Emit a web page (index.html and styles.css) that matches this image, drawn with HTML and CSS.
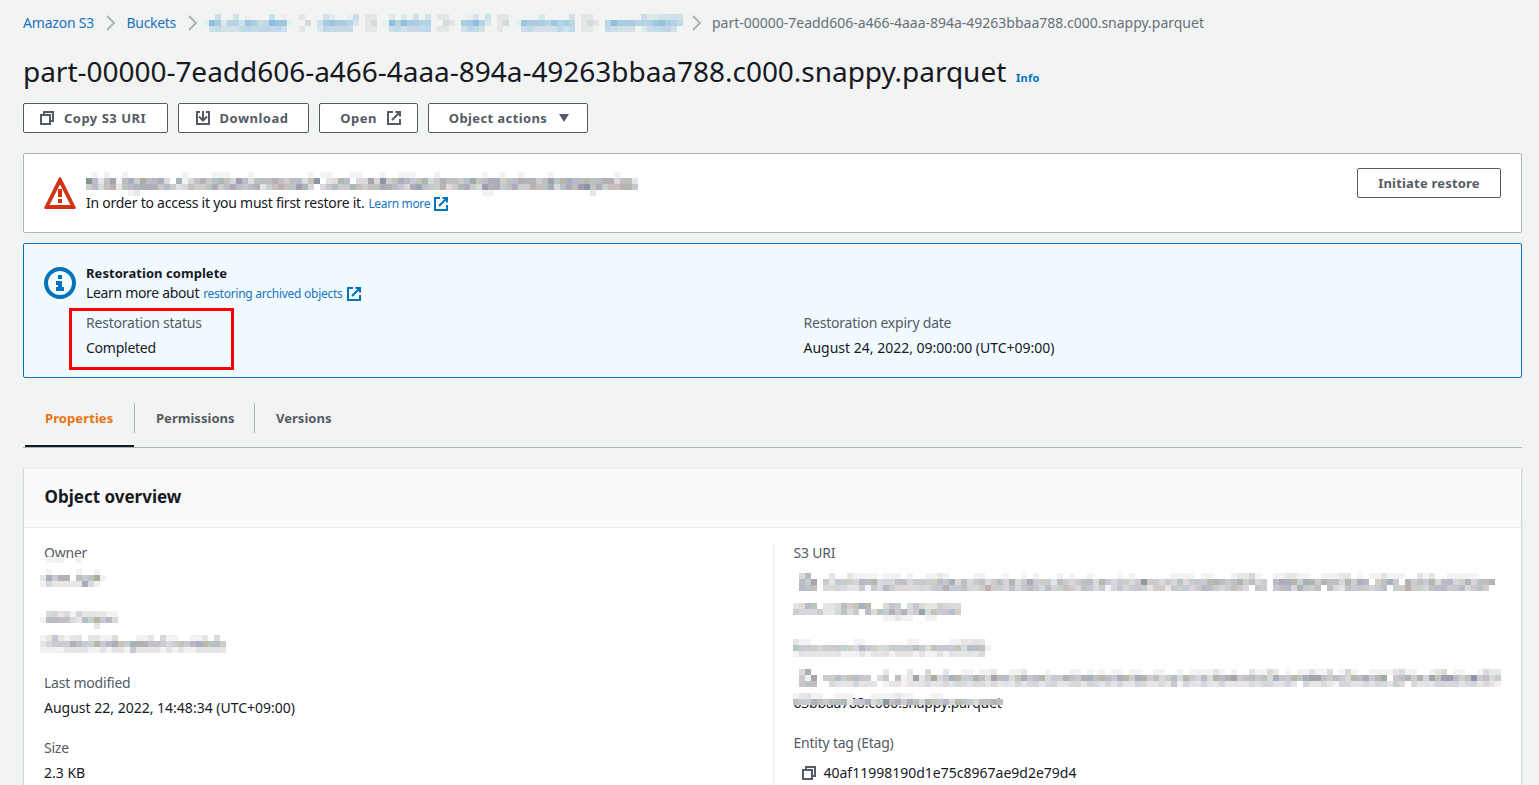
FILE: index.html
```html
<!DOCTYPE html>
<html lang="en">
<head>
<meta charset="utf-8">
<title>Amazon S3 object</title>
<link rel="stylesheet" href="styles.css">
</head>
<body>
<svg class="defs" width="0" height="0">
  <symbol id="copy" viewBox="0 0 16 16"><path d="M2 5h9v9H2zM5 5V2h9v9h-3" fill="none" stroke="currentColor" stroke-width="2"/></symbol>
  <symbol id="ext" viewBox="0 0 16 16"><path d="M7 2H2v12h12V9M9.500 2H14v4.500M14 2L6 10" fill="none" stroke="currentColor" stroke-width="2"/></symbol>
  <symbol id="down" viewBox="0 0 16 16"><path d="M5 2H2v12h12V2h-3M8 1v9M4 6.500l4 4 4-4" fill="none" stroke="currentColor" stroke-width="2"/></symbol>
  <symbol id="chev" viewBox="0 0 10 16"><path d="M1 1l7 7-7 7" fill="none" stroke="#aab7b8" stroke-width="2"/></symbol>
</svg>
<main class="page">
  <nav class="crumbs">
    <a class="c-home">Amazon S3</a><svg class="chev"><use href="#chev"/></svg>
    <a class="c-buckets">Buckets</a><svg class="chev"><use href="#chev"/></svg>
    <span class="mosaic c-path" data-m="path"></span><svg class="chev c-last"><use href="#chev"/></svg>
    <span class="c-file">part-00000-7eadd606-a466-4aaa-894a-49263bbaa788.c000.snappy.parquet</span>
  </nav>
  <header class="title"><h1>part-00000-7eadd606-a466-4aaa-894a-49263bbaa788.c000.snappy.parquet</h1><a class="info">Info</a></header>
  <div class="buttons">
    <button class="btn b-copy"><svg class="ic"><use href="#copy"/></svg><span>Copy S3 URI</span></button>
    <button class="btn b-down"><svg class="ic"><use href="#down"/></svg><span>Download</span></button>
    <button class="btn b-open"><span>Open</span><svg class="ic"><use href="#ext"/></svg></button>
    <button class="btn b-act"><span>Object actions</span><svg class="caret" viewBox="0 0 10 8"><path d="M0 0h10L5 8z" fill="currentColor"/></svg></button>
  </div>
  <section class="alert warn">
    <svg class="badge" viewBox="0 0 32 32"><path fill-rule="evenodd" d="M14.800 1q1.200-2 2.400 0L31.800 30.500q.2 1.500-1.200 1.500H1.400Q0 32 .2 30.500zM16 7.500L5.500 28h21z" fill="#d13212"/><path d="M14 12h4v8h-4zM14 22h4v4h-4z" fill="#d13212"/></svg>
    <div class="alert-text">
      <div class="line"><span class="mosaic m-warn" data-m="warn"></span></div>
      <div class="line l-order"><span>In order to access it you must first restore it.</span> <a class="small">Learn more</a><svg class="ic blue"><use href="#ext"/></svg></div>
    </div>
    <button class="btn b-restore"><span>Initiate restore</span></button>
  </section>
  <section class="alert done">
    <svg class="badge" viewBox="0 0 32 32"><circle cx="16" cy="16" r="14" fill="none" stroke="#0073bb" stroke-width="4"/><path d="M14 8h4v4h-4zM12 14h6v6h2v4h-8v-4h2v-2h-2z" fill="#0073bb"/></svg>
    <div class="alert-text">
      <div class="line"><b>Restoration complete</b></div>
      <div class="line l-about"><span>Learn more about</span> <a class="small">restoring archived objects</a><svg class="ic blue"><use href="#ext"/></svg></div>
      <div class="facts">
        <div class="fact"><div class="label">Restoration status</div><div class="value">Completed</div><i class="marker"></i></div>
        <div class="fact"><div class="label">Restoration expiry date</div><div class="value date">August 24, 2022, 09:00:00 (UTC+09:00)</div></div>
      </div>
    </div>
  </section>
  <nav class="tabs"><a class="tab on">Properties</a><a class="tab">Permissions</a><a class="tab t3">Versions</a></nav>
  <section class="card">
    <h2>Object overview</h2>
    <div class="cols">
      <div class="col">
        <div class="item"><div class="label">Owner</div><span class="mosaic m-owner" data-m="owner"></span></div>
        <div class="item"><span class="mosaic m-region" data-m="region"></span></div>
        <div class="item"><div class="label">Last modified</div><div class="value date">August 22, 2022, 14:48:34 (UTC+09:00)</div></div>
        <div class="item"><div class="label">Size</div><div class="value date">2.3 KB</div></div>
      </div>
      <div class="col right">
        <div class="item tall"><div class="label">S3 URI</div><span class="mosaic m-uri" data-m="uri"></span></div>
        <div class="item tall"><div class="tail">63bbaa788.c000.snappy.parquet</div><span class="mosaic m-arn" data-m="arn"></span></div>
        <div class="item"><div class="label">Entity tag (Etag)</div><div class="value date etag"><svg class="ic"><use href="#copy"/></svg><span>40af11998190d1e75c8967ae9d2e79d4</span></div></div>
      </div>
    </div>
  </section>
</main>
<script src="mosaic.js"></script>
</body>
</html>
```
FILE: styles.css
```css
* { box-sizing: border-box; }
body { margin: 0; background: #f2f3f3; font: 14px/20px "Noto Sans", "Open Sans", sans-serif; color: #16191f; height: 785px; overflow: hidden; }
.defs { position: absolute; }
.page { padding: 13px 17px 0 23px; height: 785px; overflow: hidden; }
a { color: #2074bf; text-decoration: none; white-space: nowrap; }
.crumbs { display: flex; align-items: center; height: 20px; white-space: nowrap; }
.chev { width: 10px; height: 16px; margin: 0 11px 0 12px; flex: none; }
.c-home { width: 71px; letter-spacing: -.2px; }
.c-buckets { width: 49px; letter-spacing: -.3px; margin-left: -.5px; }
.mosaic { display: block; flex: none; }
.mosaic svg { display: block; }
.c-path { margin: 0 0 0 -5.5px; width: 480px; }
.c-last { margin: 0 10px 0 9px; }
.c-file { color: #687078; letter-spacing: -.01px; }
.title { display: flex; height: 36px; margin-top: 20px; align-items: center; }
h1 { margin: 0; font-size: 28px; line-height: 36px; font-weight: 400; width: 983px; white-space: nowrap; letter-spacing: -.03px; }
.info { font-size: 11px; font-weight: 700; color: #0073bb; margin: 13px 0 0 10px; letter-spacing: .3px; }
.buttons { display: flex; gap: 10px; margin-top: 14px; }
.btn { height: 30px; border: 1px solid #545b64; border-radius: 2px; background: #fff; color: #545b64; font: 700 13px/20px "Noto Sans", sans-serif; letter-spacing: .5px; padding: 0; display: flex; align-items: center; justify-content: center; gap: 9px; white-space: nowrap; }
.ic { width: 16px; height: 16px; flex: none; color: #545b64; }
.blue { color: #0073bb; }
.b-copy { width: 145px; padding-right: 6px; }
.b-down { width: 131px; padding-right: 4px; }
.b-open { width: 99px; padding-left: 5px; }
.b-act { width: 160px; gap: 12px; padding-left: 2px; letter-spacing: .4px; }
.caret { width: 10px; height: 8px; }
.b-restore { width: 144px; margin-left: auto; letter-spacing: .2px; }
.alert { display: flex; border: 1px solid #aab7b8; border-radius: 2px; background: #fff; padding: 14px 20px 0; }
.warn { margin-top: 20px; height: 80px; }
.done { margin-top: 10px; height: 135px; padding-top: 19px; border-color: #0073bb; background: #f1faff; }
.badge { width: 32px; height: 32px; margin: 9px 10px 0 0; flex: none; }
.done .badge { margin-top: 4px; }
.warn .alert-text { padding-top: 5px; }
.done .alert-text { flex: 1; }
.line { height: 20px; display: flex; white-space: nowrap; align-items: center; gap: 4px; letter-spacing: -.25px; }
.line b { font-size: 13px; letter-spacing: .05px; }
.l-about { letter-spacing: -.33px; }
.line .ic { margin: 1px 0 0 -1px; }
.small { font-size: 12px; margin-top: 2px; letter-spacing: -.26px; }
.l-order .small { letter-spacing: -.35px; }
.m-warn { margin-top: 2px; }
.facts { display: grid; grid-template-columns: 717.5px 1fr; margin-top: 10px; }
.fact { position: relative; }
.label { color: #545b64; height: 20px; letter-spacing: -.22px; }
.value { height: 20px; margin-top: 5px; white-space: nowrap; letter-spacing: -.25px; }
.date { letter-spacing: 0; }
.marker { position: absolute; left: -17.5px; top: -5.500px; width: 165px; height: 62px; border: 3px solid #f00; }
.tabs { display: flex; margin-top: 20px; padding-left: 1px; height: 50px; border-bottom: 1px solid #aab7b8; }
.tab { color: #545b64; font-size: 13px; font-weight: 700; position: relative; height: 30px; margin-top: 5px; padding: 5px 20px 5px 21px; border-right: 1px solid #aab7b8; width: 120px; letter-spacing: .03px; }
.on { width: 111px; color: #ec7211; letter-spacing: .1px; }
.on::after { content: ""; position: absolute; left: 1px; right: 0; top: 42px; height: 2px; background: #16191f; }
.t3 { border: 0; }
.card { margin-top: 20px; height: 330px; background: #fff; border: 1px solid #d5dbdb; border-top-color: #eaeded; box-shadow: 0 1px 1px #001c2433; }
h2 { margin: 0; height: 59px; background: #fafafa; border-bottom: 1px solid #eaeded; padding: 18px 20.5px; font-size: 17px; line-height: 20px; font-weight: 700; }
.cols { display: grid; grid-template-columns: 749px 1fr; padding-top: 15px; }
.col { padding-left: 20px; }
.right { border-left: 1px solid #eaeded; height: 245px; padding-left: 19.5px; }
.item { height: 65px; position: relative; }
.tall { height: 95px; }
.m-owner { position: absolute; left: -4px; top: 14px; }
.m-region { position: absolute; left: -4px; top: 3px; }
.m-uri { position: absolute; left: -.5px; top: 30px; }
.m-arn { position: absolute; left: -.5px; top: 31px; }
.tail { padding-top: 55px; white-space: nowrap; letter-spacing: -.2px; }
.etag { display: flex; align-items: center; gap: 7px; padding-left: 7px; margin-top: 10px; }
```
FILE: mosaic.js
```javascript
// Redacted values are drawn as 6px tiles; each digit is a tile's darkness.
// A piece is [first column, first row, rows, tone].
const separator = (col, rows) => [col, 0, rows, "chevron"];
const tiles = {
  path: [
    [0, 0, ["003003010003010", "186255376448771", "034333444444430"], "link"],
    separator(16, ["10", "02", "10"]),
    [19, 0, ["0310013", "3676652", "2444440"], "link"],
    separator(27, ["11", "12", "11"]),
    [30, 0, ["02020303", "18586655", "03434444"], "link"],
    separator(39, ["110", "021", "110"]),
    [43, 0, ["01203", "66852", "34430"], "link"],
    separator(49, ["11", "12", "10"]),
    [52, 0, ["0000200003", "1766657565", "0343333434"], "link"],
    separator(63, ["110", "121", "110"]),
    [67, 0, ["0000003223333", "5866655578654", "4333302344430"], "link"]
  ],
  warn: [[0, 0, [
    "01010010000000001000011100010000000001011000110001001110001000000010010010000100000000001000",
    "95257156475563061356456537535556545535802365033738456545634655457556645566645756655655663552",
    "45356255666645423544564565456245655763034544654556654367544634664376645644655635657856455664",
    "00000001200000000000000000000000000000000000000000000000000000000011000000000000000020000000"
  ]]],
  owner: [[0, 0, ["01110010000"]], [0, 2, ["01000010010", "26466054571", "13222226310"]]],
  region: [
    [0, 0, ["03323132222110", "15555325464530", "00000000020000"]],
    [0, 4, ["1242122022113000112031100112030", "2344465446456546665543454566554", "1111222211212214222212121122222"]]
  ],
  uri: [
    [0, 0, [
      "035000200211110111010011210000110001001010001010010000101000000111101100012231001122110011122010112111002120011111000",
      "054704244435563335534444546353453453634644425434553643443484434353444665456453405666466465536465045640645463553463556",
      "055503333224143543333334464453346443534543534543543413434442442444345543454304404553644505325444345044644355544534540"
    ]],
    [0, 5, ["2355022354566003440343224333", "4333422353405354646347354454", "0000000000000001121100110000"]],
    [0, 11, ["211000000011000000011000001122220", "544434444435443344445435444535551", "122222221112122212221211212222230"]]
  ],
  arn: [
    [0, 0, [
      "0360000000000002000200300200110112001120001000110101011011001100101111210100211320101121130131001111231100123011001322",
      "0417044545544034051272473466446537553564563446546656546646645345364353656745545364465677545436564670456463757754584534",
      "0455003222322201221222322323323323222323323322332332323223322324132232232222323322320322321332232332430322233332332321"
    ]],
    [0, 4, ["12211001110001111211000110000000000", "54465455624463485646536545365435565"]]
  ]
};
const tints = [[0, 0, 0], [-5, 0, 5], [6, 0, -2], [-3, 4, -1], [-1, -4, 3], [5, 3, -6], [0, 1, 2]];
const tones = {
  link: [[242, 243, 243], [12, 6.500, 3]],
  chevron: [[242, 243, 243], [14, 13, 13]],
  text: [[255, 255, 255], [13, 13, 12.500]]
};
for (const host of document.querySelectorAll(".mosaic")) {
  let out = "", width = 0, height = 0;
  for (const [left, top, rows, tone = "text"] of tiles[host.dataset.m]) {
    const [start, step] = tones[tone];
    rows.forEach((row, y) => [...row].forEach((digit, x) => {
      width = Math.max(width, left + x + 1);
      height = Math.max(height, top + y + 1);
      const level = Number(digit);
      if (!level) return;
      const t = tints[(x * 5 + y * 3 + (x * x >> 2)) % 7];
      const sway = tone === "text" ? level / 3 : tone === "link" ? 1 : 0;
      const rgb = start.map((v, i) => Math.round(v - level * step[i] + t[i] * sway));
      out += `<rect x="${(left + x) * 6}" y="${(top + y) * 6}" width="6" height="6" fill="rgb(${rgb})"/>`;
    }));
  }
  host.innerHTML = `<svg width="${width * 6}" height="${height * 6}" shape-rendering="crispEdges">${out}</svg>`;
}
```
